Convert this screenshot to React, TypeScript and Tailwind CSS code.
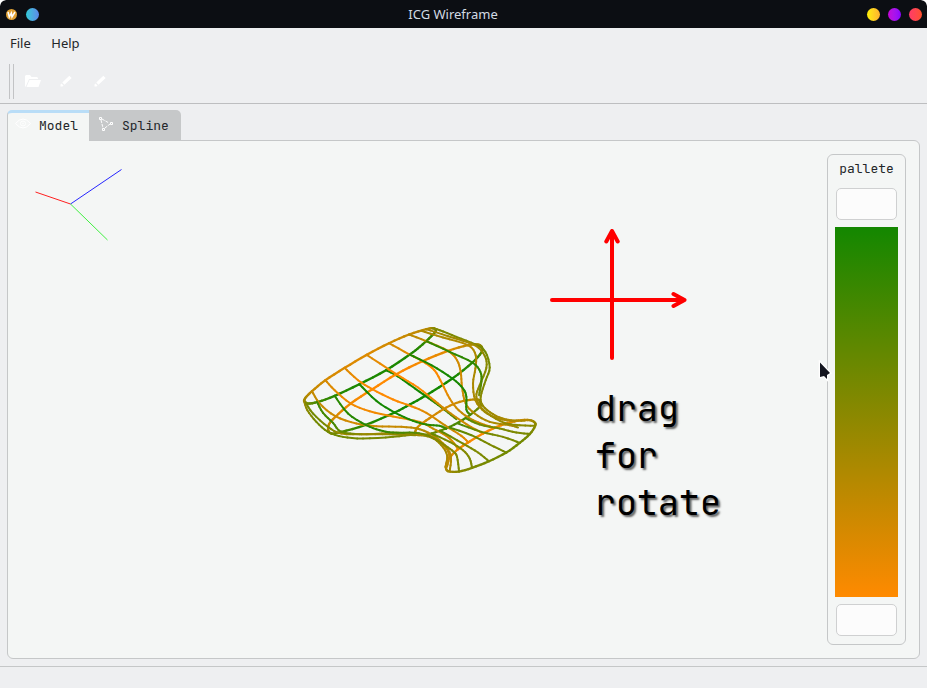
type Pt = [number, number, number];

// Each vertex is x, y and depth; depth runs from 0 (green) to 1 (orange).
const curves: { w?: number; p: Pt[] }[] = [
  { p: [[289,180,.04],[325,199,0],[390,245,0],[425,270,.1],[465,299,.2],[500,327,.3]] },
  { w: 7, p: [[43,272,.6],[48,262,.65],[67,243,.75],[107,210,.82],[165,173,.85],[231,134,.85],[298,99,.8],[358,73,.75],[410,57,.7],[432,54,.6],[438,62,.4],[425,78,.2],[390,110,.08],[360,133,.04],[289,180,.04],[209,222,.04],[135,257,.1],[85,275,.2],[55,280,.4],[43,272,.6]] },
  { w: 7, p: [[115,360,.65],[118,342,.75],[137,320,.85],[183,280,.95],[248,237,1],[320,192,1],[398,153,.95],[475,122,.85],[535,105,.7],[565,103,.6],[577,112,.45],[575,127,.3],[548,157,.1],[488,205,0],[410,255,0],[360,283,0],[315,307,0],[228,344,.08],[155,365,.3],[125,370,.5],[115,360,.65]] },
  { w: 6.5, p: [[377,372,.7],[378,360,.75],[390,345,.8],[430,317,.82],[470,292,.8],[510,275,.78],[550,268,.7],[568,269,.6],[572,277,.5],[570,290,.4],[530,322,.22],[480,350,.25],[425,370,.4],[390,375,.55],[377,372,.7]] },
  { w: 7, p: [[468,470,.7],[475,450,.8],[505,417,.95],[580,370,1],[635,345,.95],[685,331,.8],[720,330,.65],[735,337,.55],[736,348,.5],[720,372,.42],[690,398,.4],[650,427,.4],[598,453,.42],[547,473,.45],[508,484,.5],[475,483,.6],[468,470,.7]] },
  { w: 6, p: [[43,272,.6],[53,300,.5],[80,335,.4],[115,365,.4],[160,380,.4],[220,385,.42],[310,380,.43],[377,374,.5],[425,382,.55],[455,405,.6],[472,435,.65],[468,470,.7]] },
  { p: [[48,277,.45],[70,310,.4],[115,350,.45],[155,370,.6],[230,372,.65],[320,368,.65],[377,372,.7],[420,377,.7],[457,400,.7],[478,432,.75],[472,470,.7]] },
  { p: [[67,243,.75],[90,280,.75],[137,318,.8],[200,340,.8],[260,348,.78],[335,350,.75],[390,357,.7],[440,382,.7],[475,418,.7],[484,445,.7],[480,482,.6]] },
  { p: [[107,210,.82],[135,240,.88],[183,280,.95],[240,303,.95],[310,319,.9],[390,335,.8],[430,355,.75],[470,377,.8],[492,398,.85],[505,417,.9]] },
  { p: [[165,173,.85],[205,210,.95],[248,237,1],[310,268,1],[365,288,.95],[410,308,.85],[465,345,.75],[515,377,.85],[536,397,.9]] },
  { p: [[231,134,.85],[320,192,1],[385,232,1],[435,272,.85],[470,300,.75],[530,342,.8],[580,370,1]] },
  { p: [[298,99,.8],[360,133,.9],[398,153,1],[434,180,1],[457,220,.95],[480,265,.85],[507,300,.75],[550,330,.75],[612,353,.9]] },
  { p: [[358,73,.7],[410,93,.75],[475,122,.85],[502,150,.8],[513,185,.8],[517,230,.8],[528,280,.75],[555,310,.65],[600,335,.65],[660,345,.65],[685,352,.5]] },
  { p: [[395,62,.65],[460,82,.65],[535,105,.7],[558,135,.65],[557,175,.65],[550,220,.65],[557,270,.65],[585,305,.6],[625,325,.65],[675,334,.7]] },
  { w: 6, p: [[427,54,.5],[450,60,.45],[500,80,.45],[557,103,.45],[587,125,.4],[600,172,.42],[588,210,.45],[573,260,.5],[580,287,.55],[610,312,.6],[650,328,.65],[705,332,.65]] },
  { p: [[410,57,.65],[475,78,.6],[555,105,.6],[585,137,.5],[590,173,.5],[570,225,.5],[560,260,.6],[580,298,.6],[632,333,.55],[675,344,.5],[733,347,.5]] },
  { p: [[82,275,.2],[100,308,.2],[130,338,.2],[155,365,.35],[215,372,.55],[300,372,.55],[377,375,.5]] },
  { p: [[135,257,.1],[175,310,.08],[228,344,.08],[270,360,.12],[310,367,.2],[375,368,.3],[420,378,.45],[465,405,.5],[492,425,.48],[502,440,.45],[508,482,.45]] },
  { p: [[209,222,.04],[260,272,0],[315,307,0],[370,332,.05],[410,343,.08],[450,347,.1],[470,356,.25]] },
  { p: [[425,370,.35],[480,395,.45],[520,420,.48],[540,445,.45],[547,473,.45]] },
  { p: [[450,361,.3],[520,400,.45],[565,427,.45],[598,453,.42]] },
  { p: [[480,352,.25],[545,375,.4],[598,402,.45],[650,427,.4]] },
  { p: [[505,340,.25],[575,365,.4],[640,380,.45],[690,398,.4]] },
  { p: [[530,325,.25],[570,343,.4],[630,355,.45],[680,367,.45],[720,371,.42]] },
  { p: [[360,133,.04],[425,165,.04],[488,205,0],[520,235,.05],[530,260,.1],[530,298,.12],[541,313,.25]] },
  { p: [[410,93,.15],[480,125,.12],[548,157,.1],[572,185,.15],[575,215,.25],[568,255,.45]] },
];

function tone(t: number) {
  return `rgb(${Math.round(19 + t * 236)},${Math.round(136 + t * 2)},0)`;
}

function Curve({ p, w = 6 }: { p: Pt[]; w?: number }) {
  return (
    <>
      {p.slice(0, -1).flatMap((b, i) => {
        const c = p[i + 1];
        const a = p[i - 1] ?? b;
        const d = p[i + 2] ?? c;
        const at = (u: number, k: number) =>
          0.5 * (2 * b[k] + (c[k] - a[k]) * u + (2 * a[k] - 5 * b[k] + 4 * c[k] - d[k]) * u * u + (3 * b[k] - a[k] - 3 * c[k] + d[k]) * u * u * u);
        return [0, 1, 2, 3].map((s) => (
          <line
            key={`${i}-${s}`}
            x1={at(s / 4, 0)}
            y1={at(s / 4, 1)}
            x2={at((s + 1) / 4, 0)}
            y2={at((s + 1) / 4, 1)}
            stroke={tone(b[2] + (c[2] - b[2]) * (s / 4))}
            strokeWidth={w}
            strokeLinecap="round"
          />
        ));
      })}
    </>
  );
}

function Pencil() {
  return (
    <svg className="h-3.5 w-3.5" viewBox="0 0 14 14" fill="#fff">
      <path d="M1.500 12.500V10.500l1-1 2 2-1 1zM3.300 8.500l7-6.800L12.700 4 5.500 10.800z" />
    </svg>
  );
}

function TitleBar() {
  return (
    <header className="flex h-7 shrink-0 items-center rounded-t-md bg-[#0c0e13] pr-[5px] pl-1.5">
      <div className="flex w-[74px] items-center gap-[9px]">
        <svg className="h-[11px] w-[11px]" viewBox="0 0 11 11">
          <circle cx="5.5" cy="5.5" r="5.5" fill="#dfa035" />
          <path d="M2 3l1.300 5 2-4 .7 4L9 3" fill="none" stroke="#fff" strokeWidth="1.5" />
        </svg>
        <span className="h-[13px] w-[13px] rounded-full bg-linear-to-r from-[#2fc9d6] to-[#5c87ea]" />
      </div>
      <h1 className="flex-1 text-center text-[13px] leading-7 text-[#d3dae3]">ICG Wireframe</h1>
      <div className="flex w-24 justify-end gap-2">
        <span className="h-[13px] w-[13px] rounded-full bg-linear-to-r from-[#fff000] to-[#ffb02e]" />
        <span className="h-[13px] w-[13px] rounded-full bg-linear-to-r from-[#c800d8] to-[#8a00ff]" />
        <span className="h-[13px] w-[13px] rounded-full bg-linear-to-r from-[#ff3a68] to-[#ff5029]" />
      </div>
    </header>
  );
}

function Palette() {
  return (
    <aside className="mt-[13px] mr-[13px] flex h-[491px] w-[79px] flex-col items-center rounded-md border border-[#c5c7c8]">
      <span className="mt-[5px] h-[18px] font-['JetBrains_Mono','Liberation_Mono',monospace] text-[13px] leading-[18px]">pallete</span>
      <button className="mt-2.5 h-8 w-[61px] shrink-0 rounded-[5px] border border-[#cfd0d1] bg-[#fcfcfc]" />
      <div className="mt-[7px] h-[370px] w-[63px] shrink-0 bg-linear-to-b/srgb from-[#138700] to-[#ff8a00]" />
      <button className="mt-[7px] h-8 w-[61px] shrink-0 rounded-[5px] border border-[#cfd0d1] bg-[#fcfcfc]" />
    </aside>
  );
}

export default function App() {
  return (
    <div className="h-[688px] w-[927px] bg-white">
      <div className="flex h-full flex-col overflow-hidden rounded-t-md bg-[#eeeff1] font-['Noto_Sans',sans-serif] text-[#232629]">
        <TitleBar />
        <nav className="flex h-8 shrink-0 items-center gap-[20.500px] pl-2.5 text-[13px]">
          <span>File</span>
          <span>Help</span>
        </nav>
        <div className="flex h-11 shrink-0 items-center border-b border-[#bdbec0] pl-[9px]">
          <div className="h-[35px] w-[5px] border-x border-[#c2c3c5]" />
          <svg className="mb-px ml-[11px] h-4 w-4" viewBox="0 0 16 16" fill="#fff">
            <path d="M0 14V3l1-1h4l1.500 2H12l1 1v1H4L1 13z" />
            <path d="M4.500 7H16l-2.500 7H1.500z" />
          </svg>
          <div className="mb-px ml-[18px] flex gap-5">
            <Pencil />
            <Pencil />
          </div>
        </div>
        <div className="mx-[7px] mt-1.5 flex h-[31px] shrink-0 font-['JetBrains_Mono','Liberation_Mono',monospace] text-[13px]">
          <div className="z-10 flex h-[31px] w-[82px] items-start rounded-tl-[5px] border-t-[3px] border-l border-t-[#b9ddf7] border-l-[#c5c7c8] bg-[#f4f6f5] pl-[7px]">
            <svg className="mt-[3px] h-4 w-4 shrink-0" viewBox="0 0 16 16" fill="none" stroke="#fff">
              <path d="M.5 7.500Q8-1.500 15.500 7.500 8 16.500.5 7.500z" />
              <circle cx="8" cy="7.500" r="2.500" />
              <circle cx="8" cy="7.500" r=".5" />
            </svg>
            <span className="mt-[5px] ml-2 leading-4">Model</span>
          </div>
          <div className="flex h-[30px] w-[92px] items-start rounded-tr-[5px] bg-[#c6c8c9] pl-[9px]">
            <svg className="mt-1.5 h-4 w-4 shrink-0" viewBox="0 0 16 16" fill="none" stroke="#fff">
              <path d="M3 4l2 8M4 3l7 4M7 12l5-4" strokeDasharray="3 1" />
              <path d="M1.500 1.500h2v2h-2zM12.500 6.500h2v2h-2zM4.500 12.500h2v2h-2z" />
            </svg>
            <span className="mt-2 ml-2 leading-4">Spline</span>
          </div>
        </div>
        <main className="relative mx-[7px] -mt-px flex h-[519px] shrink-0 justify-end rounded-b-md rounded-tr-md border border-[#c5c7c8] bg-[#f4f6f5]">
          <svg className="absolute top-0 left-0 h-[517px] w-[819px]" viewBox="8 141 819 517" fill="none">
            <path d="M70.500 204L35.500 192" stroke="#ff2020" />
            <path d="M70.500 204L121.500 169.500" stroke="#2525ff" />
            <path d="M70.500 204L107.500 240" stroke="#40f040" />
            <g transform="translate(289.700 310.200) scale(.33333)">
              {curves.map((c, i) => <Curve key={i} {...c} />)}
            </g>
            <path d="M612 358V231M606.300 241.500L612 231l5.700 10.500M552 300h132.500M673.500 294l11 6-11 6" stroke="#f00" strokeWidth="4" strokeLinecap="round" strokeLinejoin="round" />
          </svg>
          <p className="absolute top-[244px] left-[587px] font-['JetBrains_Mono','Liberation_Mono',monospace] text-[35px] leading-[47px] text-black [text-shadow:2px_2px_2px_#0009]">
            drag<br />for<br />rotate
          </p>
          <Palette />
          <svg className="absolute top-[219px] left-[809px] h-[22px] w-4" viewBox="0 0 16 22">
            <path d="M3 2.500v14.500l4-1 3 3v-4l3-2z" fill="#13151f" stroke="#fff" strokeWidth="2.500" paintOrder="stroke" />
          </svg>
        </main>
        <footer className="mt-[7px] flex-1 border-t border-[#c5c7c8]" />
      </div>
    </div>
  );
}
